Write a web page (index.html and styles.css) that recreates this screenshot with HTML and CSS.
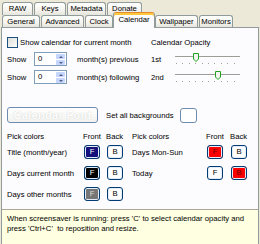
FILE: index.html
```html
<!DOCTYPE html>
<html>
  <head>
    <meta charset="UTF-8">
    <title>Calendar settings</title>
    <link rel="stylesheet" href="styles.css">
  </head>
  <body>
    <div class="tabs">
      <div class="tabrow back">
        <span class="tab t-raw">RAW</span>
        <span class="tab t-keys">Keys</span>
        <span class="tab t-meta">Metadata</span>
        <span class="tab t-donate">Donate</span>
      </div>
      <div class="tabrow front">
        <span class="tab t-general">General</span>
        <span class="tab t-adv">Advanced</span>
        <span class="tab t-clock">Clock</span>
        <span class="tab t-cal active">Calendar</span>
        <span class="tab t-wall">Wallpaper</span>
        <span class="tab t-mon">Monitors</span>
      </div>
    </div>

    <div class="panel">
      <div class="opts">
        <label class="check"><span class="box"></span>Show calendar for current month</label>
        <span class="opacity-title">Calendar Opacity</span>

        <span>Show</span>
        <div class="spin"><span class="val">0</span><span class="arrows"><i class="up"></i><i class="down"></i></span></div>
        <span></span>
        <span>month(s) previous</span>
        <span>1st</span>
        <div class="slider"><span class="track"></span><span class="ticks"></span><svg class="thumb" style="left: 21px" width="6" height="9" viewBox="0 0 6 9"><path d="M0.5 0.5 H5.5 V6 L3 8.5 L0.5 6 Z" fill="#F4F4F0" stroke="#21A121"/></svg></div>

        <span>Show</span>
        <div class="spin"><span class="val">0</span><span class="arrows"><i class="up"></i><i class="down"></i></span></div>
        <span></span>
        <span>month(s) following</span>
        <span>2nd</span>
        <div class="slider"><span class="track"></span><span class="ticks"></span><svg class="thumb" style="left: 43px" width="6" height="9" viewBox="0 0 6 9"><path d="M0.5 0.5 H5.5 V6 L3 8.5 L0.5 6 Z" fill="#F4F4F0" stroke="#21A121"/></svg></div>
      </div>

      <div class="fontrow">
        <button type="button" class="fontbtn">Calendar Font</button>
        <span class="setall">Set all backgrounds</span>
        <button type="button" class="smallbtn"></button>
      </div>

      <div class="colors">
        <div class="crow chead">
          <span>Pick colors</span><span>Front</span><span>Back</span>
          <span>Pick colors</span><span>Front</span><span>Back</span>
        </div>
        <div class="crow">
          <span>Title (month/year)</span>
          <span><b class="cbtn navy">F</b></span><span><b class="cbtn">B</b></span>
          <span>Days Mon-Sun</span>
          <span><b class="cbtn red">F</b></span><span><b class="cbtn">B</b></span>
        </div>
        <div class="crow">
          <span>Days current month</span>
          <span><b class="cbtn black">F</b></span><span><b class="cbtn">B</b></span>
          <span>Today</span>
          <span><b class="cbtn">F</b></span><span><b class="cbtn red">B</b></span>
        </div>
        <div class="crow">
          <span>Days other months</span>
          <span><b class="cbtn gray">F</b></span><span><b class="cbtn">B</b></span>
          <span></span><span></span><span></span>
        </div>
      </div>

      <div class="info">
        When screensaver is running: press 'C' to select calendar opacity and<br>
        press 'Ctrl+C'&nbsp; to reposition and resize.
      </div>
    </div>
  </body>
</html>
```

FILE: styles.css
```css
body {
  margin: 0;
  width: 260px;
  height: 244px;
  overflow: hidden;
  background-color: #ECE9D8;
  font-family: "Liberation Sans", Arial, sans-serif;
  font-size: 7.7px;
  color: #000;
}

/* tab strip, two rows */
.tabs {
  height: 27px;
  padding-left: 2px;
}

.tabrow {
  display: flex;
  gap: 1px;
  align-items: flex-start;
}

.back {
  padding-top: 2px;
  height: 13px;
}

.tab {
  box-sizing: border-box;
  height: 13px;
  border: 1px solid #919B9C;
  border-bottom: none;
  border-radius: 3px 3px 0 0;
  background: linear-gradient(#FFFFFF, #F4F3EE 60%, #E6E5DC);
  text-align: center;
  line-height: 12px;
  white-space: nowrap;
}

.front {
  height: 12px;
}

.front .tab {
  height: 12px;
  line-height: 11px;
}

.front .tab.active {
  position: relative;
  z-index: 1;
  height: 16px;
  margin-top: -3px;
  margin-left: -1px;
  margin-right: -1px;
  border-top: 1px solid #E68B2C;
  box-shadow: inset 0 2px 0 #FFC73C;
  background: #FCFCFE;
  line-height: 13px;
}

.t-raw { width: 31px; }
.t-keys { width: 32px; }
.t-meta { width: 39px; }
.t-donate { width: 35px; }
.t-general { width: 38px; }
.t-adv { width: 43px; }
.t-clock { width: 28px; }
.t-cal { width: 42px; }
.t-wall { width: 43px; }
.t-mon { width: 34px; }

/* page body */
.panel {
  box-sizing: border-box;
  margin-left: 1px;
  width: 258px;
  height: 217px;
  border: 1px solid #919B9C;
  background-color: #FCFCFE;
}

.opts {
  display: grid;
  grid-template-columns: 27px 33px 10px 74px 21px 1fr;
  grid-template-rows: 12px 14px 14px;
  row-gap: 4px;
  align-items: center;
  padding: 8px 0 0 5px;
}

.check {
  grid-column: 1 / 5;
  display: flex;
  align-items: center;
  gap: 2px;
}

.check .box {
  box-sizing: border-box;
  width: 11px;
  height: 11px;
  border: 1px solid #1C5180;
  background: linear-gradient(135deg, #DCDCD7, #FFFFFF);
}

.opacity-title {
  grid-column: 5 / 7;
}

.spin {
  box-sizing: border-box;
  display: flex;
  height: 14px;
  border: 1px solid #7F9DB9;
  background: #fff;
}

.spin .val {
  flex: 1;
  padding-left: 3px;
  line-height: 12px;
}

.spin .arrows {
  display: flex;
  flex-direction: column;
  width: 9px;
  padding: 0 1px 0 0;
}

.spin i {
  flex: 1;
  margin-top: 1px;
  border-radius: 1px;
  background: #C6D5FB;
  display: flex;
  align-items: center;
  justify-content: center;
}

.spin i::after {
  content: "";
  border-left: 2px solid transparent;
  border-right: 2px solid transparent;
}

.spin .up::after {
  border-bottom: 2px solid #4D6185;
}

.spin .down::after {
  border-top: 2px solid #4D6185;
}

.slider {
  position: relative;
  width: 70px;
  height: 14px;
}

.slider .track {
  position: absolute;
  left: 3px;
  right: 2px;
  top: 4px;
  height: 1px;
  background: #9D9C99;
  box-shadow: 0 1px 0 #fff;
}

.slider .ticks {
  position: absolute;
  left: 4px;
  right: 2px;
  top: 11px;
  height: 1px;
  background: repeating-linear-gradient(90deg, #A0A0A0 0 1px, transparent 1px 6.4px);
}

.slider .thumb {
  position: absolute;
  top: 1px;
}

/* font + backgrounds */
.fontrow {
  display: flex;
  align-items: center;
  height: 16px;
  margin-top: 23px;
  padding-left: 5px;
}

.fontbtn {
  width: 91px;
  height: 16px;
  padding: 0;
  border: 1px solid #6F8CB0;
  border-radius: 3px;
  background: linear-gradient(#FFFFFF, #F2F2EE);
  color: #FFFFFF;
  text-shadow: 0 0 1px #BDBDBD;
  font-family: "Liberation Sans", Arial, sans-serif;
  font-size: 11px;
  font-weight: bold;
  letter-spacing: 0.3px;
}

.setall {
  margin-left: 8px;
}

.smallbtn {
  width: 17px;
  height: 15px;
  margin-left: 6px;
  padding: 0;
  border: 1px solid #6F8CB0;
  border-radius: 3px;
  background: #FFFFFF;
}

/* colour pickers */
.colors {
  padding-left: 5px;
  margin-top: 8px;
}

.crow {
  display: grid;
  grid-template-columns: 76px 23px 26px 74px 24px 1fr;
  align-items: center;
  height: 14px;
}

.chead {
  height: 10px;
  margin-bottom: 4px;
}

.crow + .crow {
  margin-top: 7px;
}

.chead + .crow {
  margin-top: 0;
}

.cbtn {
  box-sizing: border-box;
  display: block;
  width: 16px;
  height: 14px;
  margin-left: 1px;
  border: 1px solid #003C74;
  border-radius: 3px;
  background: #FFFFFF;
  box-shadow: inset 0 0 0 1px #E4ECF7;
  text-align: center;
  line-height: 12px;
  font-weight: normal;
}

.cbtn.navy { background: #12127A; color: #fff; }
.cbtn.black { background: #000; color: #fff; }
.cbtn.gray { background: #767676; color: #ddd; }
.cbtn.red { background: #FF0000; color: #6A0000; }

/* hint */
.info {
  margin-top: 8px;
  height: 33px;
  padding: 4px 5px 0;
  border-top: 1px solid #ACA899;
  background: #FFFFE1;
  line-height: 10px;
  white-space: nowrap;
}
```
